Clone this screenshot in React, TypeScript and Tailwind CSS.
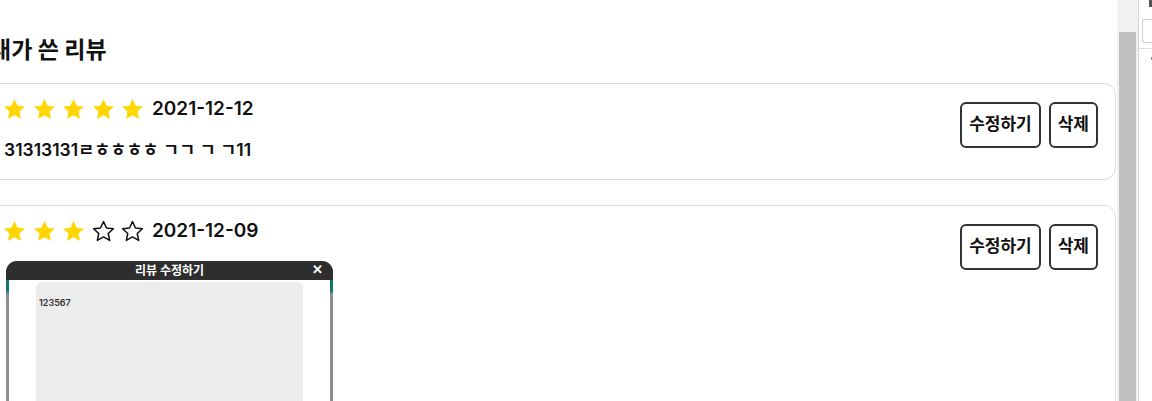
import React from 'react';

const FONT = "font-['Inter','Noto_Sans_CJK_KR',sans-serif]";

const Star = ({ filled }: { filled: boolean }) => (
  <svg width="21" height="21" viewBox="1.6 1.6 20.8 20.8" className="shrink-0">
    <path
      d="M12 2.2l2.95 6.3 6.85.8-5.1 4.7 1.4 6.8L12 17.4l-6.1 3.4 1.4-6.8-5.1-4.7 6.85-.8z"
      fill={filled ? '#FFD600' : '#fff'}
      stroke={filled ? '#FFD600' : '#111'}
      strokeWidth={filled ? 0.5 : 1.5}
      strokeLinejoin="round"
    />
  </svg>
);

const Stars = ({ count }: { count: number }) => (
  <div className="flex items-center gap-[8.5px]">
    {[0, 1, 2, 3, 4].map((i) => (
      <Star key={i} filled={i < count} />
    ))}
  </div>
);

const ActionButtons = () => (
  <div className="flex gap-2 mt-[6px]">
    <button className="h-[46px] px-[7px] bg-white border-2 border-[#333] rounded-[6px] text-[17px] font-bold text-[#111]">
      수정하기
    </button>
    <button className="h-[46px] px-[7px] bg-white border-2 border-[#333] rounded-[6px] text-[17px] font-bold text-[#111]">
      삭제
    </button>
  </div>
);

// screenshot of the edit modal attached to the review
const ModalShot = () => (
  <div className="w-[327px] h-[240px] mt-[17px] rounded-t-[11px] bg-[linear-gradient(to_bottom,#0e7a6b_0px,#0e7a6b_30px,#8d8d8d_33px)] px-[3px] flex flex-col overflow-hidden">
    <div className="-mx-[3px] h-[19px] shrink-0 bg-[#2e2e2e] rounded-t-[11px] flex items-center justify-center relative">
      <span className="text-white text-[12px] font-bold leading-none">리뷰 수정하기</span>
      <span className="absolute right-[10px] top-[2px] text-white text-[13px] font-bold leading-none">✕</span>
    </div>
    <div className="flex-1 bg-white pt-[2px] pl-[27px] pr-[27px]">
      <div className="h-full bg-[#ececec] rounded-[6px] px-[3px] pt-[6px]">
        <span className="text-[9px] font-semibold text-[#333] leading-none">123567</span>
      </div>
    </div>
  </div>
);

export default function App() {
  return (
    <div className={`flex h-[401px] w-[1152px] overflow-hidden bg-white text-[#111] ${FONT}`}>
      <main className="w-[1117px] shrink-0 overflow-hidden">
        <div className="-ml-[16px] w-[1132px]">
          <h2 className="mt-[35px] pl-[6px] h-[30px] text-[23px] leading-[30px] font-bold">내가 쓴 리뷰</h2>

          <div className="mt-[18px] border border-[#dcdcdc] rounded-[12px] pl-[19px] pr-[17px] pt-[12px] pb-[17px] flex justify-between">
            <div>
              <div className="flex items-center gap-[9px] h-[26px]">
                <Stars count={5} />
                <span className="text-[19px] font-semibold">2021-12-12</span>
              </div>
              <p className="mt-[16px] text-[17.5px] leading-[24px] font-semibold">31313131ㄹㅎㅎㅎㅎ ㄱㄱ ㄱ ㄱ11</p>
            </div>
            <ActionButtons />
          </div>

          <div className="mt-[25px] border border-[#dcdcdc] rounded-[12px] pl-[19px] pr-[17px] pt-[12px] flex justify-between">
            <div>
              <div className="flex items-center gap-[9px] h-[26px]">
                <Stars count={3} />
                <span className="text-[19px] font-semibold">2021-12-09</span>
              </div>
              <div className="ml-[2px]">
                <ModalShot />
              </div>
            </div>
            <ActionButtons />
          </div>
        </div>
      </main>

      {/* scrollbar */}
      <div className="w-[21px] shrink-0 bg-[#f1f1f1] pt-[32px] px-[2px]">
        <div className="h-full bg-[#c1c1c1]" />
      </div>
      <div className="w-px shrink-0 bg-[#d6d6d6]" />

      {/* side panel */}
      <div className="flex-1 bg-white flex flex-col">
        <div className="h-[8px] pl-[10px]">
          <div className="w-[3px] h-[7px] bg-[#555]" />
        </div>
        <div className="mt-[11px] ml-[3px] h-[24px] border border-[#cfcfcf] rounded-l-[3px] border-r-0" />
        <div className="mt-[5px] h-px bg-[#dedede]" />
        <div className="mt-[8px] ml-[12px] w-px h-[3px] bg-[#888]" />
      </div>
    </div>
  );
}
